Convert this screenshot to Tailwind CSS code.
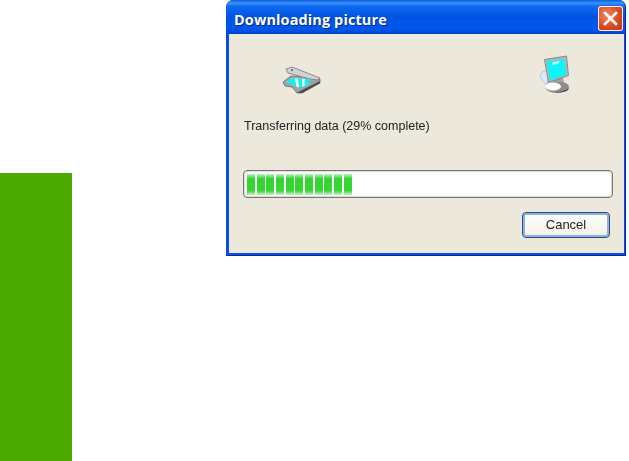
<!DOCTYPE html>
<html lang="en">
<head>
<meta charset="UTF-8">
<title>Downloading picture</title>
<script src="https://cdn.jsdelivr.net/npm/@tailwindcss/browser@4"></script>
</head>
<body class="bg-white">
<div class="flex w-[629px] h-[461px] overflow-hidden font-['Liberation_Sans',sans-serif]">
  <!-- green sidebar -->
  <div class="w-[72px] h-full pt-[173px] shrink-0">
    <div class="h-full bg-[#4ca900]"></div>
  </div>

  <!-- dialog -->
  <div class="ml-[154px] w-[400px] h-[256px] flex flex-col rounded-t-[7px] overflow-hidden bg-[#0a4fe0] border-r border-b border-[#062a9c] blur-[0.35px]">
    <div class="h-[34px] shrink-0 flex items-center justify-between pl-[8px] pr-[2px] pt-[2px] bg-[linear-gradient(180deg,#0a5ce0_0%,#3b93fb_9%,#0f6af2_18%,#0053e2_50%,#0058ee_85%,#0044c8_100%)]">
      <span class="mt-[4px] text-white font-bold text-[14.5px] tracking-[0.1px] font-['Open_Sans',sans-serif] [text-shadow:1px_1px_1px_#0a2a90]">Downloading picture</span>
      <div class="w-[25px] h-[25px] rounded-[3px] border border-white/90 flex items-center justify-center bg-[radial-gradient(circle_at_35%_35%,#ef8a62,#d9481f_60%,#c03a12)]">
        <svg width="17" height="17" viewBox="0 0 17 17"><path d="M3 3L14 14M14 3L3 14" stroke="#fff" stroke-width="2.6" stroke-linecap="square"/></svg>
      </div>
    </div>

    <div class="flex-1 ml-[3px] mr-[1px] mb-[2px] bg-[#ece9dc] flex flex-col">
      <div class="flex justify-between items-start pl-[53px] pr-[50px] pt-[18px] h-[80px]">
        <svg class="mt-[13px]" width="40" height="30" viewBox="0 0 40 30">
          <path d="M1 17L9 11L26 12L38 14L38 18L20 28L15 28L10 22L3 21Z" fill="#a3a3a3" stroke="#6a6a6a" stroke-width="0.8"/>
          <path d="M4 4L10 2L38 13L36 15L28 14L6 8Z" fill="#d2d2d2" stroke="#777" stroke-width="0.8"/>
          <path d="M4 17L10 13L28 14L27 20L17 23L11 20Z" fill="#12f2f6"/>
          <path d="M13 13.5L16 13.5L17 22.5L14.5 21.5ZM20 13.5L23 14L22.5 21L20.5 21.5Z" fill="#fff"/>
          <path d="M15 28L20 28L38 18L38 16L20 25Z" fill="#4c4c4c"/>
          <circle cx="10" cy="5" r="1" fill="#3a4fc8"/>
        </svg>
        <svg width="36" height="42" viewBox="0 0 36 42">
          <path d="M4 20C1 24 3 30 9 32L12 18Z" fill="#d9e8fb" stroke="#a8c4e8" stroke-width="0.8"/>
          <path d="M15 28L25 25L27 34L13 35Z" fill="#a5a5a5"/>
          <ellipse cx="19" cy="35" rx="12" ry="5.5" fill="#8c8c8c"/>
          <ellipse cx="15" cy="34.5" rx="8" ry="4" fill="#fff"/>
          <path d="M9 38.5C15 41.5 25 41 31 36L30 38C25 41.5 14 41.5 9 38.5Z" fill="#333"/>
          <path d="M6.5 7.5L28.5 4L30.5 23.5L10.5 30.5Z" fill="#b5b5b5" stroke="#777" stroke-width="0.8"/>
          <path d="M8.5 9.5L26.5 7L28.5 22.5L12 28.5Z" fill="#0cf5f8"/>
          <path d="M15 10L22 9L20 12L14 13Z" fill="#d8fdfe"/>
        </svg>
      </div>

      <p class="pl-[15px] text-[12.5px] leading-[16px] mt-[4px] text-[#222]">Transferring data (29% complete)</p>

      <div class="ml-[14px] mt-[36px] w-[370px] h-[28px] rounded-[4px] border border-[#77776f] bg-white flex items-center gap-[1.67px] pl-[3px] [box-shadow:inset_0_0_0_1px_#dcdcd8]">
        <i class="block w-[8px] h-[21px] bg-[linear-gradient(180deg,#c4f0c4,#33d633_22%,#33d633_78%,#c4f0c4)]"></i>
        <i class="block w-[8px] h-[21px] bg-[linear-gradient(180deg,#c4f0c4,#33d633_22%,#33d633_78%,#c4f0c4)]"></i>
        <i class="block w-[8px] h-[21px] bg-[linear-gradient(180deg,#c4f0c4,#33d633_22%,#33d633_78%,#c4f0c4)]"></i>
        <i class="block w-[8px] h-[21px] bg-[linear-gradient(180deg,#c4f0c4,#33d633_22%,#33d633_78%,#c4f0c4)]"></i>
        <i class="block w-[8px] h-[21px] bg-[linear-gradient(180deg,#c4f0c4,#33d633_22%,#33d633_78%,#c4f0c4)]"></i>
        <i class="block w-[8px] h-[21px] bg-[linear-gradient(180deg,#c4f0c4,#33d633_22%,#33d633_78%,#c4f0c4)]"></i>
        <i class="block w-[8px] h-[21px] bg-[linear-gradient(180deg,#c4f0c4,#33d633_22%,#33d633_78%,#c4f0c4)]"></i>
        <i class="block w-[8px] h-[21px] bg-[linear-gradient(180deg,#c4f0c4,#33d633_22%,#33d633_78%,#c4f0c4)]"></i>
        <i class="block w-[8px] h-[21px] bg-[linear-gradient(180deg,#c4f0c4,#33d633_22%,#33d633_78%,#c4f0c4)]"></i>
        <i class="block w-[8px] h-[21px] bg-[linear-gradient(180deg,#c4f0c4,#33d633_22%,#33d633_78%,#c4f0c4)]"></i>
        <i class="block w-[8px] h-[21px] bg-[linear-gradient(180deg,#c4f0c4,#33d633_22%,#33d633_78%,#c4f0c4)]"></i>
      </div>

      <div class="flex justify-end pr-[14px] mt-[14px]">
        <button class="w-[88px] h-[26px] rounded-[4px] border border-[#2a4a80] text-[13px] text-[#222] [box-shadow:inset_0_0_0_2px_#8fb2e4] bg-[linear-gradient(180deg,#fff,#f2f0e6)]">Cancel</button>
      </div>
    </div>
  </div>
</div>
</body>
</html>
